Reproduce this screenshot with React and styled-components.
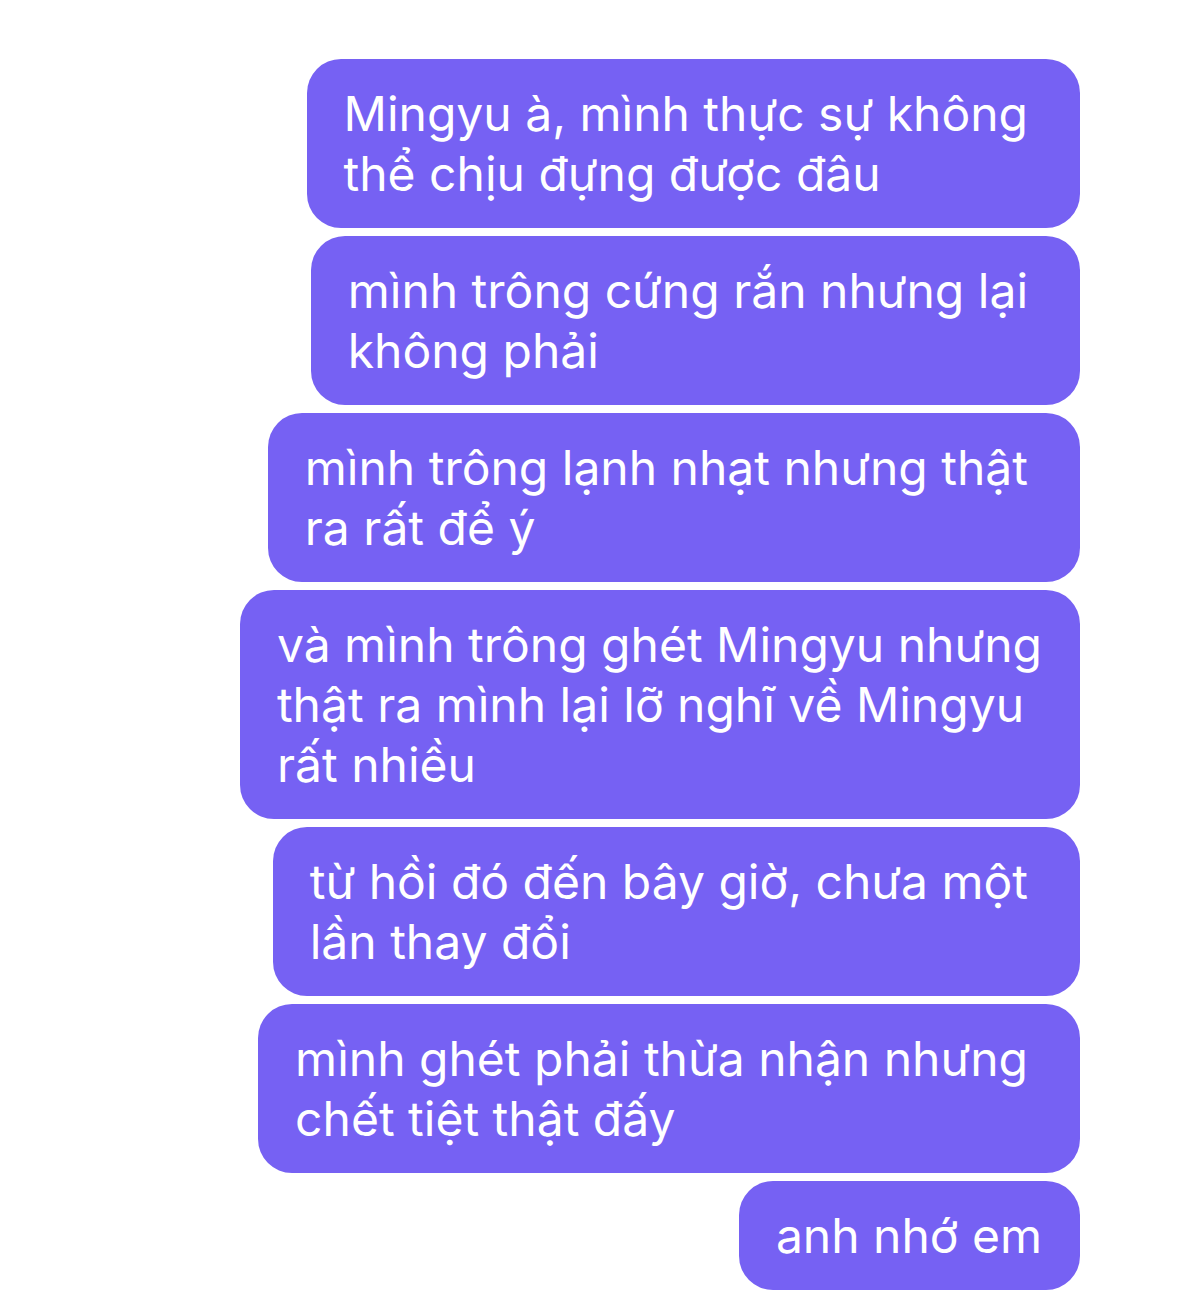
import React from "react";
import styled, { createGlobalStyle } from "styled-components";

const GlobalStyle = createGlobalStyle`
  html, body {
    margin: 0;
    padding: 0;
    background: #ffffff;
  }
  body {
    font-family: Inter, "Noto Sans", "DejaVu Sans", sans-serif;
    -webkit-font-smoothing: antialiased;
  }
`;

const messages = [
  { lines: ["Mingyu à, mình thực sự không", "thể chịu đựng được đâu"], wrapped: true },
  { lines: ["mình trông cứng rắn nhưng lại", "không phải"], wrapped: true },
  { lines: ["mình trông lạnh nhạt nhưng thật", "ra rất để ý"], wrapped: true },
  {
    lines: [
      "và mình trông ghét Mingyu nhưng",
      "thật ra mình lại lỡ nghĩ về Mingyu",
      "rất nhiều",
    ],
  },
  { lines: ["từ hồi đó đến bây giờ, chưa một", "lần thay đổi"], wrapped: true },
  { lines: ["mình ghét phải thừa nhận nhưng", "chết tiệt thật đấy"], wrapped: true },
  { lines: ["anh nhớ em"] },
];

const Thread = styled.main`
  width: 1203px;
  min-height: 1305px;
  box-sizing: border-box;
  padding: 59px 123px 0 0;
  display: flex;
  flex-direction: column;
  align-items: flex-end;
  gap: 8px;
`;

const Bubble = styled.div`
  background: #7661f3;
  color: #ffffff;
  border-radius: 34px;
  padding: 24.5px ${(p) => (p.$wrapped ? 52 : 38)}px 24.5px 37px;
  font-size: 48px;
  line-height: 60px;
  white-space: nowrap;
`;

const Line = styled.div`
  display: block;
`;

export default function App() {
  return (
    <>
      <GlobalStyle />
      <Thread>
        {messages.map((m, i) => (
          <Bubble key={i} $wrapped={m.wrapped}>
            {m.lines.map((t, j) => (
              <Line key={j}>{t}</Line>
            ))}
          </Bubble>
        ))}
      </Thread>
    </>
  );
}
